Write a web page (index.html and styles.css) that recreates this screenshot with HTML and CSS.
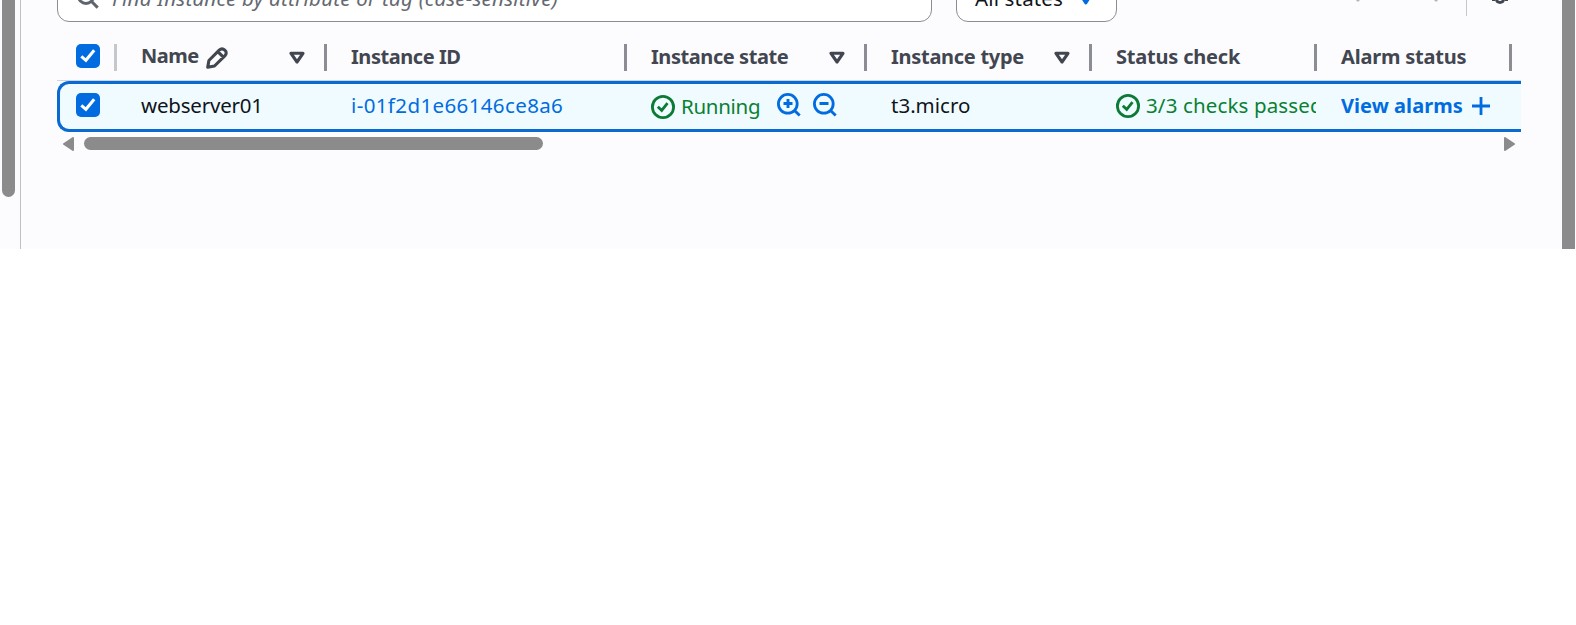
FILE: index.html
```html
<!DOCTYPE html>
<html lang="en">
<head>
<meta charset="utf-8">
<title>Instances</title>
<link rel="stylesheet" href="styles.css">
</head>
<body>
<svg width="0" height="0" class="defs">
  <symbol id="check" viewBox="0 0 24 24"><path d="M5.3 12.3l4.6 4L18.2 6.2" fill="none" stroke="#fff" stroke-width="3"/></symbol>
  <symbol id="sort" viewBox="0 0 16 14"><path d="M2 2.3h12L8 11z" fill="none" stroke="#424650" stroke-width="3.1" stroke-linejoin="round"/></symbol>
  <symbol id="ok" viewBox="0 0 24 24"><circle cx="12" cy="12" r="10.6" fill="none" stroke="#0b7a35" stroke-width="2.8"/><path d="M6.8 11.8l3.9 3.6 5.8-7.2" fill="none" stroke="#0b7a35" stroke-width="2.8"/></symbol>
</svg>
<div class="console">
  <aside class="side"><div class="side-thumb"></div></aside>
  <main class="main">
    <div class="toolbar">
      <div class="search">
        <svg class="lens" width="24" height="24" viewBox="0 0 24 24"><circle cx="10" cy="9" r="7.5" fill="none" stroke="#5f646e" stroke-width="3"/><path d="M15 14l6.7 6.6" stroke="#5f646e" stroke-width="3"/></svg>
        <span class="t-search">Find Instance by attribute or tag (case-sensitive)</span>
      </div>
      <div class="select"><span class="t-all">All states</span><svg width="16" height="14" viewBox="0 0 16 14"><path d="M2.2 2.2h11.2L7.8 11z" fill="#006ce0" stroke="#006ce0" stroke-width="3" stroke-linejoin="round"/></svg></div>
      <div class="pager">
        <svg class="prev" width="12" height="20" viewBox="0 0 12 20"><path d="M10 2L2 10l8 8" fill="none" stroke="#b4b4bb" stroke-width="3"/></svg>
        <svg class="next" width="12" height="20" viewBox="0 0 12 20"><path d="M2 2l8 8-8 8" fill="none" stroke="#b4b4bb" stroke-width="3"/></svg>
        <span class="rule"></span>
        <svg class="gear" width="20" height="22" viewBox="0 0 20 22"><path d="M6.6 15v2.2Q7.2 19.4 10 19.4t3.4-2.2V15M2 16.6h3M15 16.6h3M6.6 7V4.8Q7.2 2.6 10 2.6t3.4 2.2V7M2 5.4h3M15 5.4h3" fill="none" stroke="#424650" stroke-width="3"/><circle cx="10" cy="11" r="3" fill="none" stroke="#424650" stroke-width="2"/></svg>
      </div>
    </div>
    <div class="grid head">
      <div class="cell pick faint"><span class="box"><svg width="24" height="24"><use href="#check"/></svg></span></div>
      <div class="cell name-head"><span class="t-name">Name</span><svg class="pen" width="22" height="22" viewBox="0 0 22 22"><path d="M1.7 20.3l1.2-6.8L13.2 3.2Q16 .5 18.8 3.2t0 5.6L8.5 19zM11.8 4.6l5.6 5.6" fill="none" stroke="#424650" stroke-width="3.1" stroke-linejoin="round"/></svg><svg class="sort" width="16" height="14"><use href="#sort"/></svg></div>
      <div class="cell"><span class="t-id">Instance ID</span></div>
      <div class="cell"><span class="t-state">Instance state</span><svg class="sort" width="16" height="14"><use href="#sort"/></svg></div>
      <div class="cell"><span class="t-type">Instance type</span><svg class="sort" width="16" height="14"><use href="#sort"/></svg></div>
      <div class="cell"><span class="t-check">Status check</span></div>
      <div class="cell"><span class="t-alarm">Alarm status</span></div>
    </div>
    <div class="grid row">
      <div class="cell pick"><span class="box"><svg width="24" height="24"><use href="#check"/></svg></span></div>
      <div class="cell"><span class="t-web">webserver01</span></div>
      <div class="cell link"><span class="t-iid">i-01f2d1e66146ce8a6</span></div>
      <div class="cell good state"><svg class="ok" width="24" height="24"><use href="#ok"/></svg><span class="t-run">Running</span>
        <svg class="zoomer" width="24" height="24" viewBox="0 0 24 24"><circle cx="10.8" cy="10.8" r="9.4" fill="none" stroke="#006ce0" stroke-width="2.8"/><path d="M17.5 17.5l5.2 5M6.5 10.5h9M11 6v9" fill="none" stroke="#006ce0" stroke-width="2.9"/></svg>
        <svg class="zoomer" width="24" height="24" viewBox="0 0 24 24"><circle cx="10.8" cy="10.8" r="9.4" fill="none" stroke="#006ce0" stroke-width="2.8"/><path d="M17.5 17.5l5.2 5M6.5 10.5h9" fill="none" stroke="#006ce0" stroke-width="2.9"/></svg></div>
      <div class="cell"><span class="t-micro">t3.micro</span></div>
      <div class="cell good passed"><svg class="ok" width="24" height="24"><use href="#ok"/></svg><span class="t-pass">3/3 checks passed</span></div>
      <div class="cell link strong"><span class="t-view">View alarms</span><svg class="plus" width="18" height="18" viewBox="0 0 18 18"><path d="M0 9h18M9 0v18" stroke="#006ce0" stroke-width="2.8"/></svg></div>
    </div>
    <div class="hscroll">
      <svg width="11" height="14" viewBox="0 0 11 14"><path d="M10 1v12L1 7z" fill="#8b8b8b" stroke="#8b8b8b" stroke-width="2" stroke-linejoin="round"/></svg>
      <div class="hthumb"></div>
      <svg class="right" width="11" height="14" viewBox="0 0 11 14"><path d="M1 1v12l9-6z" fill="#8b8b8b" stroke="#8b8b8b" stroke-width="2" stroke-linejoin="round"/></svg>
    </div>
  </main>
  <div class="vscroll"></div>
</div>
</body>
</html>
```
FILE: styles.css
```css
* { box-sizing: border-box; }
body { margin: 0; background: #fff; font-family: "Noto Sans", "Open Sans", sans-serif; font-size: 20.5px; line-height: 28px; color: #0f141a; }
svg { display: block; flex: none; }
.defs { position: absolute; }
.console { display: flex; width: 1576px; height: 249px; background: #fcfcfe; overflow: hidden; }
.side { width: 21px; border-right: 1px solid #c0c0c6; padding-left: 2px; flex: none; }
.side-thumb { width: 13px; height: 197px; background: #8b8b8b; border-radius: 0 0 7px 7px; }
.main { width: 1541px; padding-left: 36px; flex: none; }
.vscroll { width: 13px; background: #8b8b8b; }
.toolbar { display: flex; align-items: flex-end; height: 22px; overflow: hidden; }
.search, .select { display: flex; align-items: center; height: 48px; flex: none; border: 1px solid #8c8c94; border-radius: 12px; background: #fff; }
.search { width: 875px; padding-left: 18px; font-style: italic; color: #656871; }
.lens { margin: 1px 12px 0 0; }
.select { width: 161px; margin-left: 24px; padding: 0 22px 0 18px; justify-content: space-between; }
.select svg { margin-top: 2px; }
.pager { display: flex; align-items: flex-end; height: 48px; margin-left: 232px; flex: none; }
.prev { margin-bottom: 19px; }
.next { margin: 0 0 19px 72px; }
.rule { width: 1px; height: 32px; margin: 0 0 6px 21px; background: #c6c6cd; }
.gear { margin: 0 0 17px 23px; }
.grid { display: grid; grid-template-columns: 60px 210px 300px 240px 225px 225px 195px; width: 1464px; }
.cell { display: flex; align-items: center; padding-left: 24px; white-space: nowrap; min-width: 0; }
.head { height: 59px; padding-top: 22px; border-bottom: 1px solid #c9d7e8; color: #424650; font-weight: 700; font-size: 20px; }
.head .cell { height: 27px; border-right: 3px solid #8c8c94; }
.head .cell > span:not(.box) { margin-top: -1px; }
.head .cell > span.t-name { margin-top: -3px; }
.head .cell.faint { border-color: #c6c6cd; }
.head .pick { align-items: flex-start; }
.cell.pick { padding-left: 19px; }
.box { width: 24px; height: 24px; border-radius: 5px; background: #006ce0; flex: none; }
.sort { margin: 1px 19px 0 auto; }
.pen { margin: 1px 0 0 7px; }
.row { height: 51px; background: #f0fbff; border: 3px solid #0b69d2; border-right: 0; border-radius: 12px 0 0 12px; }
.row .cell { height: 42px; }
.row .cell > span:not(.box) { margin-top: -1px; }
.row .cell.pick { padding-left: 16px; }
.row .cell:not(.pick) { position: relative; left: -3px; }
.link { color: #006ce0; }
.strong { font-weight: 700; font-size: 20px; }
.row .strong > span.t-view { margin-top: 1px; }
.good { color: #0a8033; }
.ok { margin-right: 6px; }
.state .ok { margin-top: 4px; }
.row .state > span.t-run { margin: 2px 17px 0 0; }
.zoomer { margin-right: 12px; }
.passed { overflow: hidden; margin-right: 1px; }
.passed .ok { margin-top: 1px; }
.plus { margin: 2px 0 0 9px; }
.hscroll { display: flex; align-items: center; width: 1464px; padding: 5px 6px 0; }
.hthumb { width: 459px; height: 13px; margin: 0 0 1px 10px; background: #8b8b8b; border-radius: 7px; }
.right { margin-left: auto; }
.t-search { letter-spacing: 0.24px; }
.t-all { letter-spacing: 0.15px; }
.t-name { letter-spacing: -0.5px; }
.t-id { letter-spacing: -0.45px; }
.t-state { letter-spacing: -0.43px; }
.t-type { letter-spacing: -0.28px; }
.t-check, .t-alarm, .t-web { letter-spacing: -0.2px; }
.t-iid { letter-spacing: 0.38px; }
.t-run { letter-spacing: -0.3px; }
.t-pass { letter-spacing: 0.14px; }
.t-view { letter-spacing: 0.05px; }
```
